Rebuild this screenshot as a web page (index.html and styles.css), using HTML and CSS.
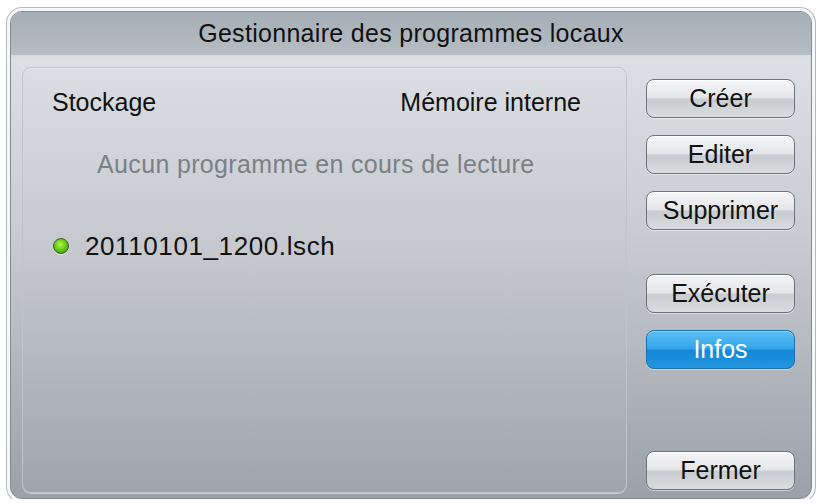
FILE: index.html
```html
<!DOCTYPE html>
<html>

<head>
	<title>Gestionnaire des programmes locaux</title>
	<meta charset="UTF-8">
	<link rel="stylesheet" href="styles.css">
</head>

<body>
	<div class="window">
		<header class="title">Gestionnaire des programmes locaux</header>
		<div class="content">
			<div class="panel">
				<div class="row">
					<span>Stockage</span>
					<span>Mémoire interne</span>
				</div>
				<p class="status">Aucun programme en cours de lecture</p>
				<div class="file">
					<span class="dot"></span>
					<span class="name">20110101_1200.lsch</span>
				</div>
			</div>
			<div class="buttons">
				<button class="btn">Créer</button>
				<button class="btn">Editer</button>
				<button class="btn">Supprimer</button>
				<button class="btn run">Exécuter</button>
				<button class="btn active">Infos</button>
				<button class="btn close">Fermer</button>
			</div>
		</div>
	</div>
</body>

</html>
```

FILE: styles.css
```css
body {
	margin: 0;
	background: #fff;
	font-family: "Liberation Sans", Arial, sans-serif;
}

.window {
	width: 800px;
	height: 486px;
	margin: 11px 0 0 10px;
	border: 1px solid #858b92;
	border-radius: 12px;
	box-shadow: 0 0 0 3px #f6f7f8, 0 0 0 4px #b4b9be;
	background: linear-gradient(to bottom, #e1e4e7, #c9cdd2 45%, #9ba1a9);
	overflow: hidden;
	display: flex;
	flex-direction: column;
}

.title {
	height: 43px;
	line-height: 43px;
	text-align: center;
	font-size: 25px;
	letter-spacing: 0.3px;
	color: #111;
	background: linear-gradient(to bottom, #a5aeb6, #b6bdc3);
	border-bottom: 3px solid #d9dde1;
}

.content {
	flex: 1;
	display: flex;
	padding: 9px 16px 5px 11px;
}

.panel {
	width: 604px;
	border: 1px solid #bfc4ca;
	border-radius: 9px;
	background: linear-gradient(to bottom, #dadde1, #c4c8cd 45%, #9fa5ad);
	box-shadow: inset 0 1px 0 rgba(255, 255, 255, 0.4), 0 1px 0 #c8cdd3;
	padding: 19px 45px 0 29px;
	font-size: 25px;
	line-height: 30px;
	color: #111;
}

.row {
	display: flex;
	justify-content: space-between;
}

.status {
	margin: 32px 0 0 45px;
	color: #7b8086;
	letter-spacing: 0.35px;
}

.file {
	display: flex;
	align-items: center;
	margin-top: 52px;
}

.name {
	font-size: 26px;
	letter-spacing: 0.6px;
}

.dot {
	width: 14px;
	height: 14px;
	margin: 0 16px 0 1px;
	border-radius: 50%;
	border: 1px solid #3f5f2c;
	background: radial-gradient(circle at 45% 40%, #b2f550, #62c80e 50%, #3a8410);
	box-shadow: 0 1px 1px rgba(255, 255, 255, 0.5);
}

.buttons {
	display: flex;
	flex-direction: column;
	margin-left: 19px;
	padding-top: 12px;
}

.btn {
	width: 149px;
	height: 39px;
	margin-bottom: 17px;
	padding: 0;
	font-family: inherit;
	font-size: 25px;
	line-height: 37px;
	color: #111;
	border: 1px solid #6e7379;
	border-radius: 8px;
	background: linear-gradient(to bottom, #f4f5f6, #e4e6e8 47%, #c9ccd0 53%, #d9dcdf);
	box-shadow: inset 0 1px 0 #fff, 0 1px 0 rgba(255, 255, 255, 0.5);
}

.run {
	margin-top: 27px;
}

.active {
	color: #fff;
	border-color: #1d6fae;
	background: linear-gradient(to bottom, #5cbef4, #33a6ea 47%, #1587d6 53%, #2296df);
	box-shadow: inset 0 1px 0 #8fd3fa, 0 1px 0 rgba(255, 255, 255, 0.4);
}

.close {
	margin-top: auto;
	margin-bottom: 3px;
}
```
